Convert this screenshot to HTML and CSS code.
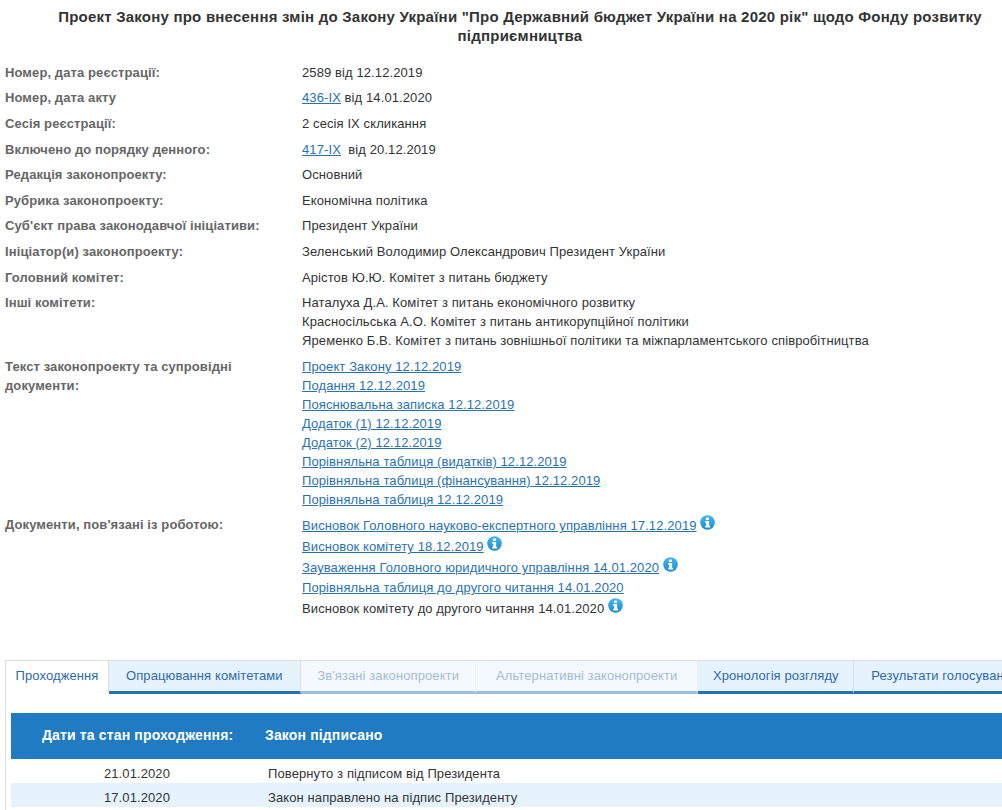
FILE: index.html
```html
<!DOCTYPE html>
<html lang="uk">
<head>
<meta charset="utf-8">
<title>Законопроект</title>
<link rel="stylesheet" href="styles.css">
</head>
<body>
<div class="page">
  <h1 class="title">Проект Закону про внесення змін до Закону України "Про Державний бюджет України на 2020 рік" щодо Фонду розвитку підприємництва</h1>
  <dl class="info">
    <div class="row"><dt>Номер, дата реєстрації:</dt><dd>2589 від 12.12.2019</dd></div>
    <div class="row"><dt>Номер, дата акту</dt><dd><a href="#">436-IX</a> від 14.01.2020</dd></div>
    <div class="row"><dt>Сесія реєстрації:</dt><dd>2 сесія IX скликання</dd></div>
    <div class="row"><dt>Включено до порядку денного:</dt><dd><a href="#">417-IX</a>&nbsp; від 20.12.2019</dd></div>
    <div class="row"><dt>Редакція законопроекту:</dt><dd>Основний</dd></div>
    <div class="row"><dt>Рубрика законопроекту:</dt><dd>Економічна політика</dd></div>
    <div class="row"><dt>Суб'єкт права законодавчої ініціативи:</dt><dd>Президент України</dd></div>
    <div class="row"><dt>Ініціатор(и) законопроекту:</dt><dd>Зеленський Володимир Олександрович Президент України</dd></div>
    <div class="row"><dt>Головний комітет:</dt><dd>Арістов Ю.Ю. Комітет з питань бюджету</dd></div>
    <div class="row"><dt>Інші комітети:</dt><dd>
      <div>Наталуха Д.А. Комітет з питань економічного розвитку</div>
      <div>Красносільська А.О. Комітет з питань антикорупційної політики</div>
      <div>Яременко Б.В. Комітет з питань зовнішньої політики та міжпарламентського співробітництва</div>
    </dd></div>
    <div class="row"><dt>Текст законопроекту та супровідні<br>документи:</dt><dd>
      <div><a href="#">Проект Закону 12.12.2019</a></div>
      <div><a href="#">Подання 12.12.2019</a></div>
      <div><a href="#">Пояснювальна записка 12.12.2019</a></div>
      <div><a href="#">Додаток (1) 12.12.2019</a></div>
      <div><a href="#">Додаток (2) 12.12.2019</a></div>
      <div><a href="#">Порівняльна таблиця (видатків) 12.12.2019</a></div>
      <div><a href="#">Порівняльна таблиця (фінансування) 12.12.2019</a></div>
      <div><a href="#">Порівняльна таблиця 12.12.2019</a></div>
    </dd></div>
    <div class="row"><dt>Документи, пов'язані із роботою:</dt><dd>
      <div class="doc"><a href="#">Висновок Головного науково-експертного управління 17.12.2019</a> <svg class="info-icon" viewBox="0 0 15 15"><use href="#i"/></svg></div>
      <div class="doc"><a href="#">Висновок комітету 18.12.2019</a> <svg class="info-icon" viewBox="0 0 15 15"><use href="#i"/></svg></div>
      <div class="doc"><a href="#">Зауваження Головного юридичного управління 14.01.2020</a> <svg class="info-icon" viewBox="0 0 15 15"><use href="#i"/></svg></div>
      <div class="doc"><a href="#">Порівняльна таблиця до другого читання 14.01.2020</a></div>
      <div class="doc">Висновок комітету до другого читання 14.01.2020 <svg class="info-icon" viewBox="0 0 15 15"><use href="#i"/></svg></div>
    </dd></div>
  </dl>

  <section class="tabs-box">
    <nav class="tabs">
      <span class="tab tab-active">Проходження</span>
      <span class="tab">Опрацювання комітетами</span>
      <span class="tab tab-off tab-related">Зв'язані законопроекти</span>
      <span class="tab tab-off tab-alt">Альтернативні законопроекти</span>
      <span class="tab tab-history">Хронологія розгляду</span>
      <span class="tab">Результати голосування</span>
    </nav>
    <div class="panel">
      <div class="head"><span class="head-label">Дати та стан проходження:</span><span>Закон підписано</span></div>
      <div class="stage"><span class="stage-date">21.01.2020</span><span>Повернуто з підписом від Президента</span></div>
      <div class="stage stage-alt"><span class="stage-date">17.01.2020</span><span>Закон направлено на підпис Президенту</span></div>
    </div>
  </section>
</div>
<svg class="defs" width="0" height="0" aria-hidden="true">
  <defs>
    <linearGradient id="g" x1="0" y1="0" x2="0" y2="1">
      <stop offset="0" stop-color="#46b6ee"/>
      <stop offset="1" stop-color="#1f8bd4"/>
    </linearGradient>
    <symbol id="i" viewBox="0 0 15 15">
      <circle cx="7.5" cy="7.5" r="7.3" fill="url(#g)"/>
      <rect x="5.9" y="2.4" width="3.1" height="2.7" rx=".7" fill="#fff"/>
      <path d="M5.2 6.1h3.9v4.6h1v1.7H5.2v-1.7h1V7.8h-1z" fill="#fff"/>
    </symbol>
  </defs>
</svg>
</body>
</html>
```
FILE: styles.css
```css
html, body { margin: 0; padding: 0; overflow-x: hidden; background: #fff; }
body { font-family: "Liberation Sans", Arial, sans-serif; font-size: 13px; color: #333; letter-spacing: .1px; }
.page { width: 1060px; padding-top: 7px; }
.title { margin: 0; width: 1040px; padding: 0 40px; box-sizing: border-box; font-size: 15px; line-height: 19px; font-weight: bold; text-align: center; color: #333; letter-spacing: .22px; height: 52.6px; }
.info { margin: 0; padding: 0 0 0 5px; }
.row { display: flex; padding: 3.3px 0; line-height: 19px; }
.row dt { width: 297px; flex: none; font-weight: bold; color: #666; }
.row dd { margin: 0; flex: 1; color: #333; }
a { color: #2a72ae; text-decoration: underline; }
.doc { line-height: 20px; }
.info-icon { width: 15px; height: 15px; vertical-align: baseline; }
.defs { display: block; height: 0; }
.tabs-box { margin: 37.4px 0 0 5px; border: 1px solid #ddd; border-width: 1px 0 0 1px; height: 149px; }
.tabs { display: flex; height: 33px; }
.tab { flex: none; box-sizing: border-box; height: 33px; line-height: 29px; padding: 0 17.5px 0 17px; text-align: center; background: #e6f3fd; border-right: 1px solid #d8dfe6; border-bottom: 3px solid #2473ae; color: #2f6aa6; white-space: nowrap; }
.tab-active { background: #fff; border-bottom-color: #fff; border-right: 1px solid #ddd; padding: 0 9.5px; }
.tab-off { opacity: .45; }
.tab-related { padding: 0 16px; }
.tab-alt { padding: 0 20px; }
.tab-history { padding: 0 14.5px; }
.panel { padding: 19px 0 0 5px; }
.head { display: flex; box-sizing: border-box; height: 46px; padding-bottom: 2px; align-items: center; background: #207bc2; color: #fff; font-weight: bold; font-size: 14px; letter-spacing: .15px; padding-left: 31px; }
.head-label { width: 223px; flex: none; }
.stage { display: flex; box-sizing: border-box; height: 24px; padding-top: 6px; line-height: 18px; }
.stage-date { width: 252px; margin-right: 5px; flex: none; text-align: center; }
.stage-alt { background: #e6f3fd; }
```
